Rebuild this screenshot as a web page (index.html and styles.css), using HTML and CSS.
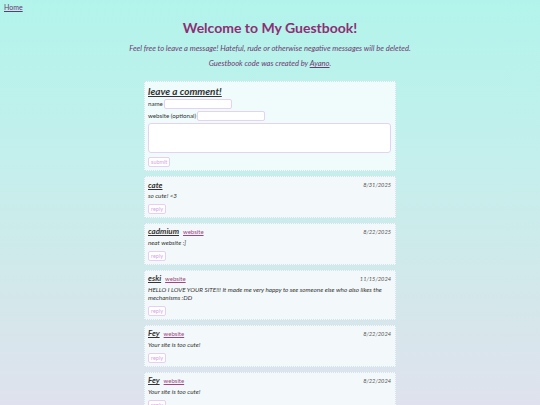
FILE: index.html
```html
<!DOCTYPE html>
<html>
<head>
<meta charset="utf-8">
<link rel="stylesheet" href="styles.css">
</head>
<body>
<nav class="top"><a href="#" class="home">Home</a></nav>
<header class="head">
  <h1 class="title">Welcome to My Guestbook!</h1>
  <p class="intro">Feel free to leave a message! Hateful, rude or otherwise negative messages will be deleted.</p>
  <p class="intro">Guestbook code was created by <a href="#" class="credit">Ayano</a>.</p>
</header>
<main class="book">
  <section class="box form-box">
    <h2 class="form-title">leave a comment!</h2>
    <div class="row"><label class="lbl">name</label><span class="field"></span></div>
    <div class="row"><label class="lbl">website (optional)</label><span class="field"></span></div>
    <div class="area"></div>
    <span class="btn">submit</span>
  </section>

  <article class="box entry">
    <div class="entry-head"><span class="who"><span class="name">cate</span></span><span class="date">8/31/2025</span></div>
    <p class="msg">so cute! &lt;3</p>
    <span class="btn">reply</span>
  </article>

  <article class="box entry">
    <div class="entry-head"><span class="who"><span class="name">cadmium</span><a href="#" class="site">website</a></span><span class="date">8/22/2025</span></div>
    <p class="msg">neat website :]</p>
    <span class="btn">reply</span>
  </article>

  <article class="box entry">
    <div class="entry-head"><span class="who"><span class="name">eski</span><a href="#" class="site">website</a></span><span class="date">11/15/2024</span></div>
    <p class="msg"><span class="line">HELLO I LOVE YOUR SITE!!! It made me very happy to see someone else who also likes the</span><br>mechanisms :DD</p>
    <span class="btn">reply</span>
  </article>

  <article class="box entry">
    <div class="entry-head"><span class="who"><span class="name">Fey</span><a href="#" class="site">website</a></span><span class="date">8/22/2024</span></div>
    <p class="msg">Your site is too cute!</p>
    <span class="btn">reply</span>
  </article>

  <article class="box entry">
    <div class="entry-head"><span class="who"><span class="name">Fey</span><a href="#" class="site">website</a></span><span class="date">8/22/2024</span></div>
    <p class="msg">Your site is too cute!</p>
    <span class="btn">reply</span>
  </article>
</main>
</body>
</html>
```

FILE: styles.css
```css
html {
  height: 100%;
}
body {
  margin: 0;
  min-height: 100%;
  background: linear-gradient(180deg, #b2f4eb 0%, #c4efec 40%, #d4e7ea 75%, #dfe2ee 100%);
  background-attachment: fixed;
  font-family: "Lato", "DejaVu Sans", sans-serif;
  color: #333;
}
.top {
  padding: 3px 0 0 4px;
  height: 10px;
  font-size: 7px;
  line-height: 9px;
}
.home {
  font-size: 7px;
  color: #6a3470;
}
.head {
  text-align: center;
}
.title {
  margin: 6px 0 0;
  font-size: 14px;
  line-height: 18px;
  font-weight: bold;
  color: #8e2e74;
}
.intro {
  margin: 7px 0 0;
  font-size: 7.6px;
  line-height: 9px;
  font-style: italic;
  color: #6e3a70;
}
.intro + .intro {
  margin-top: 6px;
}
.credit {
  color: #6e3a70;
}
.book {
  width: 252px;
  margin: 13px auto 0;
  display: flex;
  flex-direction: column;
  gap: 5px;
}
.box {
  display: flex;
  flex-direction: column;
  align-items: stretch;
  border: 1px dotted #d4e4ee;
  padding: 2px 4px 3px 3px;
  background: #f3f9fa;
}
.form-box {
  background: #effcfb;
  padding-top: 3px;
}
.form-title {
  margin: 0;
  font-size: 10px;
  line-height: 12px;
  font-style: italic;
  font-weight: bold;
  text-decoration: underline;
  color: #333;
}
.row {
  display: flex;
  align-items: center;
  gap: 1px;
  height: 12px;
}
.row:first-of-type {
  margin-top: 1px;
}
.lbl {
  font-size: 6.2px;
  line-height: 8px;
  color: #333;
}
.field {
  width: 66px;
  height: 8px;
  background: #fff;
  border: 1px solid #e4d2f2;
  border-radius: 2px;
}
.area {
  margin-top: 1px;
  height: 28px;
  background: #fff;
  border: 1px solid #e4d2f2;
  border-radius: 3px;
}
.btn {
  align-self: flex-start;
  margin-top: 4px;
  height: 8px;
  padding: 0 2px;
  font-size: 5.5px;
  line-height: 8px;
  color: #d6a3e6;
  background: #fff;
  border: 1px solid #e8cef2;
  border-radius: 2px;
}
.entry-head {
  display: flex;
  justify-content: space-between;
  align-items: center;
  height: 11px;
}
.who {
  display: flex;
  align-items: baseline;
  gap: 4px;
}
.name {
  font-size: 8px;
  line-height: 10px;
  font-weight: bold;
  font-style: italic;
  text-decoration: underline;
  color: #333;
}
.site {
  font-size: 6px;
  line-height: 10px;
  color: #a0457e;
}
.date {
  font-size: 5.7px;
  line-height: 8px;
  font-style: italic;
  color: #555;
}
.msg {
  margin: 2px 0 0;
  font-size: 6.3px;
  line-height: 8px;
  font-style: italic;
  color: #333;
}
.line {
  white-space: nowrap;
}
```
